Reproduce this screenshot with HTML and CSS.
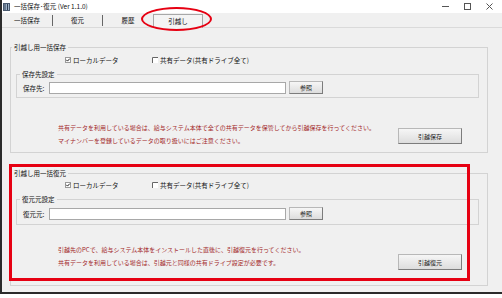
FILE: index.html
```html
<!DOCTYPE html>
<html lang="ja">
<head>
<meta charset="utf-8">
<title>一括保存･復元</title>
<link rel="stylesheet" href="styles.css">
</head>
<body>
<div class="window">
  <div class="titlebar">
    <svg class="appicon" width="7" height="8" viewBox="0 0 7 8"><rect x="0.5" y="0.5" width="6" height="7" fill="#9fb3c8" stroke="#4a5a70"/><path d="M2 1v6M4.5 1v6" stroke="#2f3f55"/></svg>
    <span class="title">一括保存･復元 (Ver 1.1.0)</span>
    <div class="controls">
      <span class="ctl"><svg width="7" height="7" viewBox="0 0 7 7"><path d="M0 3.5h7" stroke="#555"/></svg></span>
      <span class="ctl"><svg width="7" height="7" viewBox="0 0 7 7"><rect x="0.5" y="0.5" width="6" height="6" fill="none" stroke="#555"/></svg></span>
      <span class="ctl"><svg width="7" height="7" viewBox="0 0 7 7"><path d="M0.5 0.5l6 6M6.5 0.5l-6 6" stroke="#555"/></svg></span>
    </div>
  </div>
  <div class="tabs">
    <div class="tab t1">一括保存</div>
    <span class="sep"></span>
    <div class="tab t2">復元</div>
    <span class="sep"></span>
    <div class="tab t3">履歴</div>
    <div class="tab active">引越し</div>
  </div>
  <div class="page">
    <fieldset class="group g1">
      <legend>引越し用一括保存</legend>
      <div class="checks">
        <span class="chk first"><svg width="6" height="6" viewBox="0 0 6 6"><rect x="0.5" y="0.5" width="5" height="5" fill="#fff" stroke="#9a9a9a"/><path d="M1.3 2.8L2.5 4.1L4.8 1.6" fill="none" stroke="#222"/></svg>ローカルデータ</span>
        <span class="chk"><svg width="6" height="6" viewBox="0 0 6 6"><rect x="0" y="0" width="6" height="6" fill="#fff"/><path d="M0.5 6V0.5H6" fill="none" stroke="#666"/></svg>共有データ(共有ドライブ全て)</span>
      </div>
      <fieldset class="sub s1">
        <legend>保存先設定</legend>
        <div class="pathrow">
          <span class="lbl">保存先:</span>
          <span class="input"></span>
          <span class="btn small">参照</span>
        </div>
      </fieldset>
      <div class="notes n1">
        <div class="msg">
          <p>共有データを利用している場合は、給与システム本体で全ての共有データを保管してから引越保存を行ってください。</p>
          <p>マイナンバーを登録しているデータの取り扱いにはご注意ください。</p>
        </div>
        <span class="btn big b1">引越保存</span>
      </div>
    </fieldset>
    <fieldset class="group g2">
      <legend>引越し用一括復元</legend>
      <div class="checks c2">
        <span class="chk first"><svg width="6" height="6" viewBox="0 0 6 6"><rect x="0.5" y="0.5" width="5" height="5" fill="#fff" stroke="#9a9a9a"/><path d="M1.3 2.8L2.5 4.1L4.8 1.6" fill="none" stroke="#222"/></svg>ローカルデータ</span>
        <span class="chk"><svg width="6" height="6" viewBox="0 0 6 6"><rect x="0" y="0" width="6" height="6" fill="#fff"/><path d="M0.5 6V0.5H6" fill="none" stroke="#666"/></svg>共有データ(共有ドライブ全て)</span>
      </div>
      <fieldset class="sub s2">
        <legend>復元元設定</legend>
        <div class="pathrow">
          <span class="lbl">復元元:</span>
          <span class="input"></span>
          <span class="btn small">参照</span>
        </div>
      </fieldset>
      <div class="notes n2">
        <div class="msg">
          <p>引越先のPCで、給与システム本体をインストールした直後に、引越復元を行ってください。</p>
          <p>共有データを利用している場合は、引越元と同様の共有ドライブ設定が必要です。</p>
        </div>
        <span class="btn big b2">引越復元</span>
      </div>
    </fieldset>
  </div>
  <div class="ellipse"></div>
  <div class="highlight"></div>
</div>
</body>
</html>
```
FILE: styles.css
```css
html, body {
  margin: 0;
  padding: 0;
}
body {
  width: 502px;
  height: 298px;
  overflow: hidden;
  background: #ffffff;
  font-family: "Noto Sans CJK JP", "Noto Sans", sans-serif;
  font-size: 6.5px;
  color: #111;
}
.window {
  position: relative;
  width: 500px;
  height: 292px;
  border-left: 2px solid #2b2b2b;
  border-bottom: 2px solid #2b2b2b;
  background: #f0f0f0;
}
.titlebar {
  height: 13px;
  background: #fff;
  display: flex;
  align-items: center;
  padding-left: 1px;
}
.appicon {
  display: block;
}
.title {
  margin-left: 4px;
  line-height: 13px;
  font-size: 6.5px;
}
.controls {
  margin-left: auto;
  display: flex;
  padding-right: 2px;
}
.ctl {
  width: 22px;
  height: 13px;
  display: flex;
  align-items: center;
  justify-content: center;
}
.ctl svg {
  display: block;
}
.tabs {
  height: 14px;
  border-bottom: 1px solid #dadada;
  display: flex;
  align-items: center;
}
.tab {
  height: 14px;
  display: flex;
  align-items: center;
  justify-content: center;
  font-size: 6.5px;
}
.t1 { width: 50px; }
.t2 { width: 49px; }
.t3 { width: 50px; }
.sep {
  width: 1px;
  height: 11px;
  background: #666;
}
.tab.active {
  width: 48px;
  height: 13px;
  margin-top: 1px;
  border: 1px solid #a8a8a8;
  border-bottom: none;
  background: #f4f4f4;
}
.page {
  padding-left: 8px;
}
fieldset {
  margin: 0;
  padding: 0;
  min-inline-size: 0;
  box-sizing: border-box;
  border: 1px solid #d3d3d3;
}
legend {
  font-size: 6.5px;
  line-height: 10px;
  padding: 0 2px;
  margin-left: 1px;
}
.group {
  width: 478px;
}
.g1 {
  margin-top: 14px;
  padding-bottom: 5px;
}
.g2 {
  margin-top: 15px;
  padding-bottom: 15px;
}
.checks {
  display: flex;
  align-items: center;
  height: 10px;
  margin-top: 3px;
  padding-left: 54px;
}
.checks.c2 {
  margin-top: 2px;
}
.chk {
  display: flex;
  align-items: center;
  white-space: nowrap;
}
.chk svg {
  display: block;
  margin-right: 2px;
}
.chk.first {
  width: 87px;
}
.sub {
  margin: 4px 8px 0 5px;
}
.sub legend {
  margin-left: 3px;
  padding: 0 2px;
}
.s1 { padding: 2px 0 3px 0; }
.s2 { padding: 3px 0 4px 0; }
.pathrow {
  display: flex;
  align-items: center;
  height: 13px;
  padding-left: 6px;
}
.lbl {
  width: 26px;
  white-space: nowrap;
}
.input {
  width: 235px;
  height: 10px;
  background: #fff;
  border: 1px solid #a8a8a8;
  margin-right: 3px;
}
.btn {
  box-sizing: border-box;
  display: flex;
  align-items: center;
  justify-content: center;
  background: linear-gradient(#f6f6f6, #dddddd);
  border: 1px solid #b8b8b8;
  border-right-color: #7c7c7c;
  border-bottom-color: #7c7c7c;
  font-size: 6px;
  color: #222;
}
.btn.small {
  width: 34px;
  height: 13px;
}
.btn.big {
  width: 64px;
  height: 16px;
}
.b1 { margin-top: 7px; }
.b2 { margin-top: 11px; }
.notes {
  display: flex;
  align-items: flex-start;
}
.n1 { margin-top: 23px; }
.n2 { margin-top: 18px; }
.msg {
  width: 340px;
  padding-left: 47px;
  color: #a3282a;
  font-size: 6px;
  line-height: 13px;
}
.msg p {
  margin: 0;
  white-space: nowrap;
}
.ellipse {
  position: absolute;
  left: 139px;
  top: 7px;
  width: 71px;
  height: 24px;
  box-sizing: border-box;
  border: 2.5px solid #e60012;
  border-radius: 50%;
}
.highlight {
  position: absolute;
  left: 7px;
  top: 164px;
  width: 461px;
  height: 117px;
  box-sizing: border-box;
  border: 3px solid #e60012;
}
```
